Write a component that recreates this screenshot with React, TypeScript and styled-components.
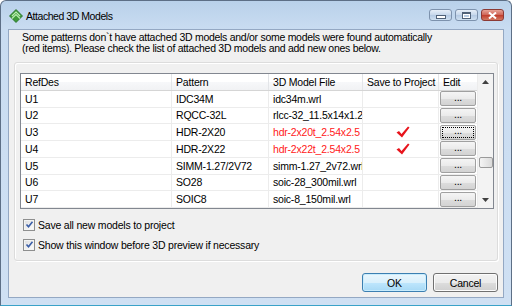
import styled, { createGlobalStyle } from 'styled-components';

interface IRow {
    ref: string
    pattern: string
    file: string
    missing?: boolean
}

const rows: IRow[] = [
    { ref: 'U1', pattern: 'IDC34M', file: 'idc34m.wrl' },
    { ref: 'U2', pattern: 'RQCC-32L', file: 'rlcc-32_11.5x14x1.2' },
    { ref: 'U3', pattern: 'HDR-2X20', file: 'hdr-2x20t_2.54x2.5', missing: true },
    { ref: 'U4', pattern: 'HDR-2X22', file: 'hdr-2x22t_2.54x2.5', missing: true },
    { ref: 'U5', pattern: 'SIMM-1.27/2V72', file: 'simm-1.27_2v72.wrl' },
    { ref: 'U6', pattern: 'SO28', file: 'soic-28_300mil.wrl' },
    { ref: 'U7', pattern: 'SOIC8', file: 'soic-8_150mil.wrl' },
]

const GlobalStyle = createGlobalStyle`
    html, body {
        margin: 0;
        padding: 0;
        background: #ffffff;
    }
    body {
        font-family: "Liberation Sans", Arial, sans-serif;
        font-size: 10.5px;
        letter-spacing: -0.2px;
        color: #000000;
    }
`

const AppIcon = () => (
    <svg width="14" height="14" viewBox="0 0 14 14">
        <polygon points="7,0.5 13.5,7 7,13.5 0.5,7" fill="#3f9a3a" stroke="#1f6b22" strokeWidth="0.8" />
        <polyline points="3,7 7,3 11,7" fill="none" stroke="#b9ecb0" strokeWidth="1.2" />
        <polyline points="3,9.5 7,5.5 11,9.5" fill="none" stroke="#b9ecb0" strokeWidth="1.2" />
    </svg>
)

const RedCheck = () => (
    <svg width="14" height="12" viewBox="0 0 14 12">
        <path d="M0.5 6.5 L3 5 L5.5 8 L12 0.5 L13.5 1.5 L6 11.5 Z" fill="#e8141c" />
    </svg>
)

const CheckGlyph = () => (
    <svg width="9" height="9" viewBox="0 0 9 9">
        <path d="M1.5 4.5 L3.5 6.8 L7.5 1.8" fill="none" stroke="#3a5ea8" strokeWidth="1.6" />
    </svg>
)

const App = () => {
    return (
        <>
            <GlobalStyle />
            <Window>
                <TitleBar>
                    <TitleIcon><AppIcon /></TitleIcon>
                    <TitleText>Attached 3D Models</TitleText>
                    <CaptionButtons>
                        <CaptionButton>
                            <MinGlyph />
                        </CaptionButton>
                        <CaptionButton>
                            <MaxGlyph />
                        </CaptionButton>
                        <CaptionButton close>
                            <svg width="9" height="7" viewBox="0 0 9 7">
                                <path d="M1 0.5 L8 6.5 M8 0.5 L1 6.5" stroke="#ffffff" strokeWidth="2" />
                            </svg>
                        </CaptionButton>
                    </CaptionButtons>
                </TitleBar>
                <Client>
                    <Intro>
                        Some patterns don`t have attached 3D models and/or some models were found automatically
                        <br />
                        (red items). Please check the list of attached 3D models and add new ones below.
                    </Intro>
                    <Group>
                        <Grid>
                            <GridBody>
                                <HeaderRow>
                                    <HeadCell w={151}>RefDes</HeadCell>
                                    <HeadCell w={97}>Pattern</HeadCell>
                                    <HeadCell w={94}>3D Model File</HeadCell>
                                    <HeadCell w={76}>Save to Project</HeadCell>
                                    <HeadCell w={38} last>Edit</HeadCell>
                                </HeaderRow>
                                {rows.map((r, i) => (
                                    <Row key={r.ref}>
                                        <Cell w={151}>{r.ref}</Cell>
                                        <Cell w={97}>{r.pattern}</Cell>
                                        <Cell w={94} red={r.missing}>{r.file}</Cell>
                                        <Cell w={76} center>{r.missing && <RedCheck />}</Cell>
                                        <Cell w={38} last tight>
                                            <EditButton focused={i === 2}>...</EditButton>
                                        </Cell>
                                    </Row>
                                ))}
                            </GridBody>
                            <ScrollBar>
                                <ScrollArrow>
                                    <svg width="7" height="4" viewBox="0 0 7 4"><polygon points="0,4 3.5,0 7,4" fill="#404040" /></svg>
                                </ScrollArrow>
                                <ScrollTrack>
                                    <Thumb />
                                </ScrollTrack>
                                <ScrollArrow>
                                    <svg width="7" height="4" viewBox="0 0 7 4"><polygon points="0,0 3.5,4 7,0" fill="#404040" /></svg>
                                </ScrollArrow>
                            </ScrollBar>
                        </Grid>
                        <Options>
                            <CheckRow>
                                <CheckBox><CheckGlyph /></CheckBox>
                                Save all new models to project
                            </CheckRow>
                            <CheckRow>
                                <CheckBox><CheckGlyph /></CheckBox>
                                Show this window before 3D preview if necessary
                            </CheckRow>
                        </Options>
                    </Group>
                    <Footer>
                        <DialogButton primary>OK</DialogButton>
                        <DialogButton>Cancel</DialogButton>
                    </Footer>
                </Client>
            </Window>
        </>
    )
}

const Window = styled.div`
    width: 512px;
    height: 306px;
    box-sizing: border-box;
    display: flex;
    flex-direction: column;
    border: 1px solid #5d6f86;
    border-bottom-color: #3aa2c8;
    border-radius: 6px 6px 0 0;
    background: linear-gradient(to bottom, #b9d1ea 0px, #c9dcf1 28px, #cfe0f3 100%);
    padding: 0 7px 7px 7px;
`

const TitleBar = styled.div`
    height: 28px;
    display: flex;
    align-items: center;
    flex-shrink: 0;
`

const TitleIcon = styled.div`
    display: flex;
    margin-left: 1px;
    margin-top: 2px;
`

const TitleText = styled.span`
    margin-left: 3px;
    margin-top: 2px;
    font-family: "Liberation Sans", Arial, sans-serif;
    font-size: 10.5px;
    letter-spacing: -0.45px;
    color: #000000;
`

const CaptionButtons = styled.div`
    margin-left: auto;
    align-self: flex-start;
    margin-top: 8px;
    display: flex;
    gap: 3px;
`

const CaptionButton = styled.div<{ close?: boolean }>`
    width: 23px;
    height: 12px;
    box-sizing: border-box;
    border: 1px solid ${p => p.close ? '#8c3a35' : '#7d92ad'};
    border-radius: 3px;
    background: ${p => p.close
        ? 'linear-gradient(to bottom, #e8a497 0%, #d06a5c 45%, #c2402f 55%, #d27a63 100%)'
        : 'linear-gradient(to bottom, #e6eef8 0%, #c9d9ec 45%, #b6cbe4 55%, #cfe0f1 100%)'};
    display: flex;
    align-items: center;
    justify-content: center;
`

const MinGlyph = styled.div`
    width: 8px;
    height: 2px;
    margin-top: 3px;
    background: #ffffff;
    border: 1px solid #4f6178;
`

const MaxGlyph = styled.div`
    width: 7px;
    height: 4px;
    background: transparent;
    border: 1px solid #4f6178;
    border-top-width: 2px;
    box-shadow: inset 0 0 0 1px #ffffff;
`

const Client = styled.div`
    flex: 1;
    background: #f0f0f0;
    border: 1px solid #94a8c3;
    display: flex;
    flex-direction: column;
    padding: 2px 5px 0 5px;
`

const Intro = styled.div`
    padding-left: 8px;
    line-height: 11px;
    letter-spacing: -0.28px;
    white-space: nowrap;
`

const Group = styled.div`
    margin-top: 8px;
    border: 1px solid #dcdcdc;
    border-radius: 3px;
    box-shadow: inset 1px 1px 0 #ffffff, 1px 1px 0 #ffffff;
    padding: 10px 3px 9px 5px;
    display: flex;
    flex-direction: column;
`

const Grid = styled.div`
    border: 1px solid #828790;
    background: #ffffff;
    display: flex;
    height: 134px;
`

const GridBody = styled.div`
    width: 456px;
    display: flex;
    flex-direction: column;
`

const HeaderRow = styled.div`
    display: flex;
    height: 16px;
    border-bottom: 1px solid #d5d5d5;
    background: linear-gradient(to bottom, #ffffff 0%, #ffffff 50%, #f7f8fa 51%, #f1f2f4 100%);
`

const HeadCell = styled.div<{ w: number, last?: boolean }>`
    width: ${p => p.w}px;
    box-sizing: border-box;
    padding-left: 4px;
    border-right: ${p => p.last ? 'none' : '1px solid #e3e5e8'};
    display: flex;
    align-items: center;
    white-space: nowrap;
    overflow: hidden;
`

const Row = styled.div`
    display: flex;
    height: 17px;
    box-sizing: border-box;
    border-bottom: 1px solid #ececec;
`

const Cell = styled.div<{ w: number, last?: boolean, red?: boolean, center?: boolean, tight?: boolean }>`
    width: ${p => p.w}px;
    box-sizing: border-box;
    padding-left: ${p => p.tight ? '1px' : '4px'};
    border-right: ${p => p.last ? 'none' : '1px solid #ececec'};
    color: ${p => p.red ? '#ff2020' : '#000000'};
    display: flex;
    align-items: center;
    justify-content: ${p => p.center ? 'center' : 'flex-start'};
    white-space: nowrap;
    overflow: hidden;
`

const EditButton = styled.div<{ focused?: boolean }>`
    width: 36px;
    height: 15px;
    box-sizing: border-box;
    border: 1px solid #a0a0a0;
    border-radius: 2px;
    background: linear-gradient(to bottom, #f5f5f5 0%, #ebebeb 50%, #dddddd 51%, #d3d3d3 100%);
    display: flex;
    align-items: center;
    justify-content: center;
    line-height: 1;
    padding-bottom: 3px;
    outline: ${p => p.focused ? '1px dotted #000000' : 'none'};
    outline-offset: -3px;
`

const ScrollBar = styled.div`
    width: 17px;
    display: flex;
    flex-direction: column;
    background: #f3f3f3;
    border-left: 1px solid #ececec;
`

const ScrollArrow = styled.div`
    height: 16px;
    display: flex;
    align-items: center;
    justify-content: center;
`

const ScrollTrack = styled.div`
    flex: 1;
    display: flex;
    flex-direction: column;
    padding-top: 67px;
    align-items: center;
`

const Thumb = styled.div`
    width: 14px;
    height: 11px;
    box-sizing: border-box;
    border: 1px solid #9a9a9a;
    border-radius: 2px;
    background: linear-gradient(to right, #f4f4f4, #dadada);
`

const Options = styled.div`
    display: flex;
    flex-direction: column;
    gap: 7px;
    margin-top: 9px;
    padding-left: 3px;
`

const CheckRow = styled.div`
    display: flex;
    align-items: center;
    gap: 3px;
    height: 13px;
    white-space: nowrap;
`

const CheckBox = styled.div`
    width: 12px;
    height: 12px;
    box-sizing: border-box;
    border: 1px solid #8e8f8f;
    background: linear-gradient(135deg, #dcdcdc 0%, #ffffff 100%);
    box-shadow: inset 0 0 0 1px #f4f4f4;
    display: flex;
    align-items: center;
    justify-content: center;
`

const Footer = styled.div`
    display: flex;
    justify-content: flex-end;
    gap: 6px;
    margin-top: 12px;
`

const DialogButton = styled.div<{ primary?: boolean }>`
    width: 65px;
    height: 19px;
    box-sizing: border-box;
    border: 1px solid ${p => p.primary ? '#3c7fb1' : '#707070'};
    border-radius: 3px;
    background: ${p => p.primary
        ? 'linear-gradient(to bottom, #eaf6fd 0%, #d9f0fc 50%, #bee6fd 51%, #a7d9f5 100%)'
        : 'linear-gradient(to bottom, #f2f2f2 0%, #ebebeb 50%, #dddddd 51%, #cfcfcf 100%)'};
    box-shadow: inset 0 0 0 1px ${p => p.primary ? '#c8ecfd' : '#fcfcfc'};
    display: flex;
    align-items: center;
    justify-content: center;
`

export default App;
